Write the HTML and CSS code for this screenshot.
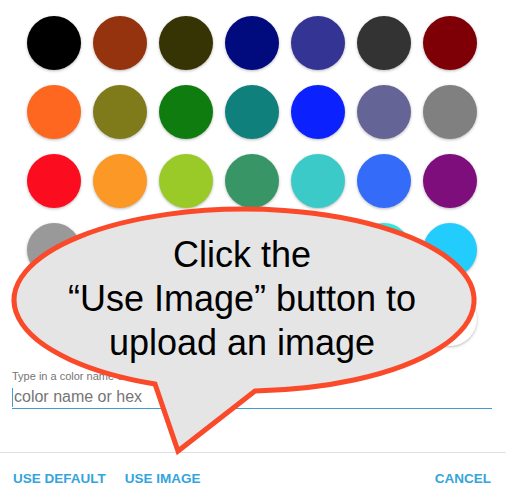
FILE: index.html
```html
<!DOCTYPE html>
<html lang="en">

<head>
    <meta charset="UTF-8">
    <meta name="viewport" content="width=device-width, initial-scale=1.0">
    <title>Color picker</title>

    <link rel="stylesheet" href="styles.css">
</head>

<body>
    <div class="dialog">
        <div class="swatches">
            <!-- row 1 -->
            <div class="swatch c-black"></div>
            <div class="swatch c-rust"></div>
            <div class="swatch c-olive-dark"></div>
            <div class="swatch c-navy"></div>
            <div class="swatch c-indigo"></div>
            <div class="swatch c-charcoal"></div>
            <div class="swatch c-maroon"></div>
            <!-- row 2 -->
            <div class="swatch c-orange"></div>
            <div class="swatch c-olive"></div>
            <div class="swatch c-green"></div>
            <div class="swatch c-teal"></div>
            <div class="swatch c-blue"></div>
            <div class="swatch c-slate"></div>
            <div class="swatch c-gray"></div>
            <!-- row 3 -->
            <div class="swatch c-red"></div>
            <div class="swatch c-amber"></div>
            <div class="swatch c-lime"></div>
            <div class="swatch c-sea"></div>
            <div class="swatch c-turquoise"></div>
            <div class="swatch c-royal"></div>
            <div class="swatch c-purple"></div>
            <!-- row 4 -->
            <div class="swatch c-silver"></div>
            <div class="swatch c-gold"></div>
            <div class="swatch c-yellow"></div>
            <div class="swatch c-bright-green"></div>
            <div class="swatch c-pink"></div>
            <div class="swatch c-aqua"></div>
            <div class="swatch c-sky"></div>
            <!-- row 5 -->
            <div class="swatch c-rose"></div>
            <div class="swatch c-peach"></div>
            <div class="swatch c-cream"></div>
            <div class="swatch c-mint"></div>
            <div class="swatch c-ice"></div>
            <div class="swatch c-lavender"></div>
            <div class="swatch c-white"></div>
        </div>

        <div class="field">
            <div class="field-label">Type in a color name or hex</div>
            <div class="field-input"><span class="caret"></span>color name or hex</div>
        </div>

        <div class="actions">
            <div class="btn">USE DEFAULT</div>
            <div class="btn">USE IMAGE</div>
            <div class="spacer"></div>
            <div class="btn">CANCEL</div>
        </div>
    </div>

    <!-- callout drawn over the dialog -->
    <div class="callout">
        <svg class="callout-shape" width="506" height="503" viewBox="0 0 506 503">
            <path d="M 155 384 A 230 91 0 1 1 255 391 L 178 451 Z" fill="#e5e5e5" stroke="#fa4a2a"
                stroke-width="5" stroke-linejoin="miter" stroke-miterlimit="10" />
        </svg>
        <div class="callout-text">Click the<br>“Use Image” button to<br>upload an image</div>
    </div>
</body>

</html>
```

FILE: styles.css
```css
* {
    box-sizing: border-box;
}

body {
    margin: 0;
    font-family: "Liberation Sans", Arial, sans-serif;
    background-color: white;
    position: relative;
    width: 506px;
    height: 503px;
    overflow: hidden;
}

.dialog {
    width: 506px;
    height: 503px;
    display: flex;
    flex-direction: column;
}

.swatches {
    display: grid;
    grid-template-columns: repeat(7, 54px);
    column-gap: 12px;
    row-gap: 15px;
    padding: 16px 0 0 27px;
}

.swatch {
    width: 54px;
    height: 54px;
    border-radius: 50%;
    box-shadow: 0 1px 3px rgba(0, 0, 0, 0.28);
}

.c-black { background-color: #000000; }
.c-rust { background-color: #96330f; }
.c-olive-dark { background-color: #363304; }
.c-navy { background-color: #020b7e; }
.c-indigo { background-color: #333494; }
.c-charcoal { background-color: #333333; }
.c-maroon { background-color: #7e0006; }

.c-orange { background-color: #fd6720; }
.c-olive { background-color: #7f7b1a; }
.c-green { background-color: #0f7c10; }
.c-teal { background-color: #10807c; }
.c-blue { background-color: #0b22fe; }
.c-slate { background-color: #646496; }
.c-gray { background-color: #808080; }

.c-red { background-color: #fb0c1f; }
.c-amber { background-color: #fb9826; }
.c-lime { background-color: #9aca27; }
.c-sea { background-color: #389666; }
.c-turquoise { background-color: #3ccac8; }
.c-royal { background-color: #346cf9; }
.c-purple { background-color: #7e0e7b; }

.c-silver { background-color: #999999; }
.c-gold { background-color: #fccc0a; }
.c-yellow { background-color: #fcfc22; }
.c-bright-green { background-color: #22fc22; }
.c-pink { background-color: #fc22fc; }
.c-aqua { background-color: #2ee8dc; }
.c-sky { background-color: #22ccfc; }

.c-rose { background-color: #fc99cc; }
.c-peach { background-color: #fccc99; }
.c-cream { background-color: #fcfc99; }
.c-mint { background-color: #ccfccc; }
.c-ice { background-color: #ccfcfc; }
.c-lavender { background-color: #cc99fc; }
.c-white { background-color: #ffffff; }

.field {
    margin: 24px 14px 0 12px;
}

.field-label {
    font-size: 11px;
    line-height: 13px;
    color: #757575;
}

.field-input {
    margin-top: 3px;
    height: 23px;
    font-size: 16px;
    line-height: 20px;
    color: #757575;
    border-bottom: 1px solid #3d9fd0;
    display: flex;
    align-items: center;
}

.caret {
    width: 1px;
    height: 19px;
    background-color: #3d9fd0;
    margin-right: 1px;
}

.actions {
    margin-top: 43px;
    border-top: 1px solid #e0e0e0;
    display: flex;
    align-items: center;
    padding: 0 15px 0 13px;
    height: 56px;
}

.btn {
    font-size: 13.5px;
    font-weight: bold;
    color: #34a4dc;
    margin-right: 19px;
    cursor: pointer;
}

.btn:last-child {
    margin-right: 0;
}

.spacer {
    flex: 1;
}

.callout {
    position: absolute;
    left: 0;
    top: 0;
    width: 506px;
    height: 503px;
    pointer-events: none;
}

.callout-shape {
    position: absolute;
    left: 0;
    top: 0;
}

.callout-text {
    position: absolute;
    left: 0;
    top: 233px;
    width: 484px;
    text-align: center;
    font-size: 36px;
    line-height: 44px;
    color: #000000;
}
```
